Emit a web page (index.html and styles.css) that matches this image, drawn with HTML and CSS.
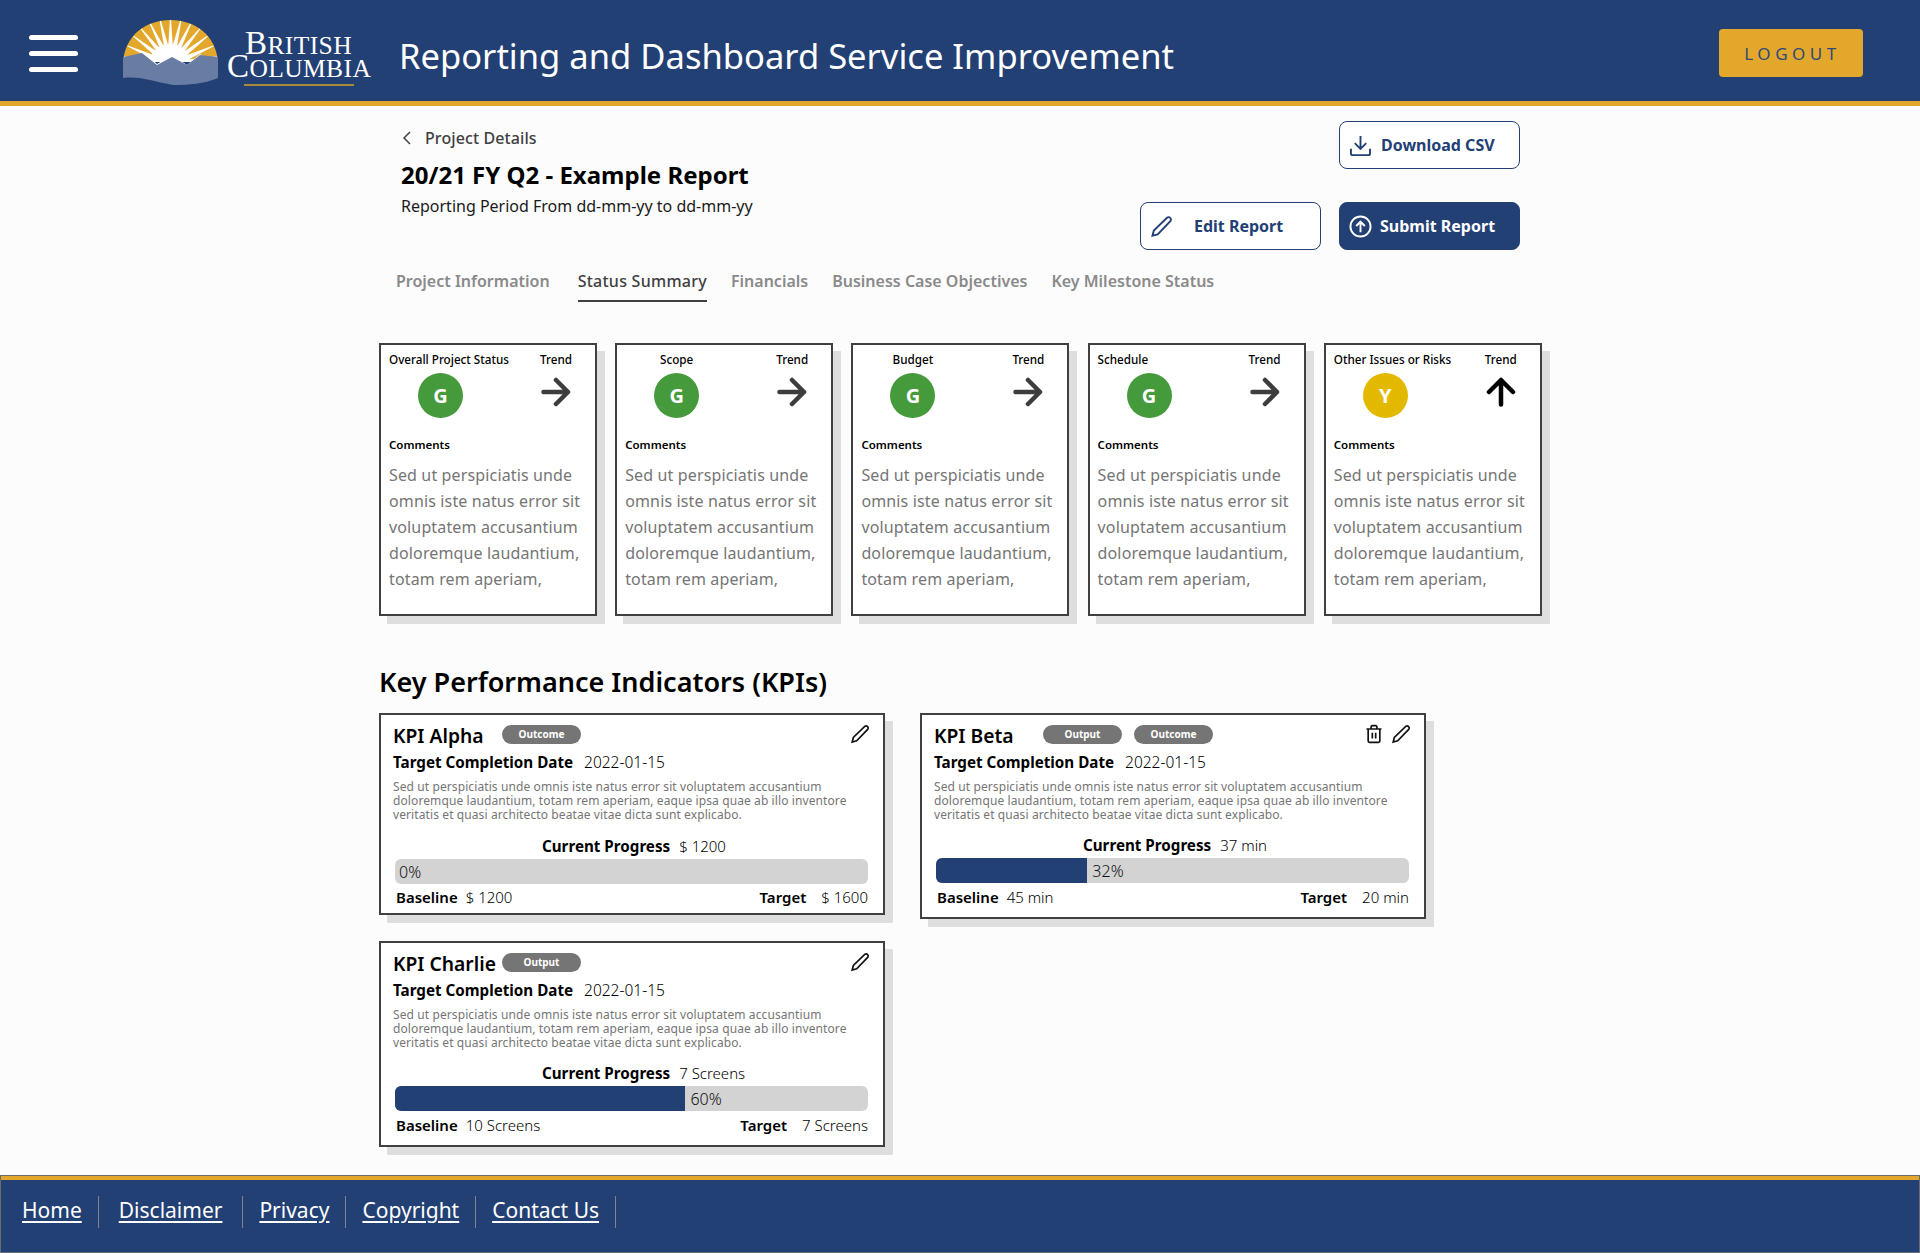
FILE: index.html
```html
<!DOCTYPE html>
<html lang="en">
<head>
<meta charset="utf-8">
<title>Reporting and Dashboard Service Improvement</title>
<link rel="stylesheet" href="styles.css">
</head>
<body>
<svg class="defs" width="0" height="0" aria-hidden="true">
  <defs>
    <symbol id="pencil" viewBox="0 0 24 24"><path d="M18 2.600a2.600 2.600 0 0 1 3.500 3.600L8 20.200 2.600 21.600 4 16.200z"/></symbol>
    <symbol id="arrow-right" viewBox="0 0 30 30"><path d="M2.500 15H27M15 3l12 12-12 12"/></symbol>
    <symbol id="arrow-up" viewBox="0 0 30 30"><path d="M15 27.500V3M3 15L15 3l12 12"/></symbol>
    <symbol id="trash" viewBox="0 0 24 24"><path d="M3 6h18M8.500 6V3.500A1.500 1.500 0 0 1 10 2h4a1.500 1.500 0 0 1 1.500 1.500V6M5 6v14.500A1.500 1.500 0 0 0 6.500 22h11a1.500 1.500 0 0 0 1.500-1.500V6M10 10.500v7M14 10.500v7"/></symbol>
    <polygon id="ray" points="45,30 50,30 48,-2 47,-2"/>
  </defs>
</svg>

<header class="topbar">
  <div class="burger" aria-label="Menu"><span></span><span></span><span></span></div>
  <div class="logo">
    <svg class="logo-mark" viewBox="0 0 95 65" aria-hidden="true">
      <defs><clipPath id="dome"><path d="M0 42C2 16 22 0 47.500 0S93 16 95 42z"/></clipPath></defs>
      <g clip-path="url(#dome)">
        <rect width="95" height="45" fill="#e3a82b"/>
        <g fill="#fff">
          <use href="#ray" transform="rotate(-80 47.500 45)"/>
          <use href="#ray" transform="rotate(-66 47.500 45)"/>
          <use href="#ray" transform="rotate(-52 47.500 45)"/>
          <use href="#ray" transform="rotate(-39 47.500 45)"/>
          <use href="#ray" transform="rotate(-26 47.500 45)"/>
          <use href="#ray" transform="rotate(-13 47.500 45)"/>
          <use href="#ray"/>
          <use href="#ray" transform="rotate(13 47.500 45)"/>
          <use href="#ray" transform="rotate(26 47.500 45)"/>
          <use href="#ray" transform="rotate(39 47.500 45)"/>
          <use href="#ray" transform="rotate(52 47.500 45)"/>
          <use href="#ray" transform="rotate(66 47.500 45)"/>
          <use href="#ray" transform="rotate(80 47.500 45)"/>
        </g>
        <circle cx="47" cy="45" r="21" fill="#fff"/>
      </g>
      <path fill="#fff" d="M12 38l9-6 13 12 15-9 15 10 13-11 8 5v8H12z"/>
      <path fill="#687ca4" d="M0 37l19-4 15 12 15-8 15 8 13-10 18 2v21c-15 6-28 7-45 7-18-3-32-9-50-7z"/>
    </svg>
    <div class="logo-text">
      <div class="logo-line1">B<small>RITISH</small></div>
      <div class="logo-line2">C<small>OLUMBIA</small></div>
      <div class="logo-rule"></div>
    </div>
  </div>
  <h1 class="app-title">Reporting and Dashboard Service Improvement</h1>
  <button class="logout">LOGOUT</button>
</header>

<main class="page">
  <section class="intro">
    <div class="intro-text">
      <a class="back"><svg class="back-chevron" viewBox="0 0 8 14"><path d="M7 1L1 7l6 6"/></svg>Project Details</a>
      <h2 class="report-title">20/21 FY Q2 - Example Report</h2>
      <p class="report-period">Reporting Period From dd-mm-yy to dd-mm-yy</p>
    </div>
    <div class="actions">
      <button class="btn btn-outline btn-download">
        <svg class="btn-icon" viewBox="0 0 24 24"><path d="M12 2v13M6 9.500l6 6 6-6M2 15.500V20a2 2 0 0 0 2 2h16a2 2 0 0 0 2-2v-4.500"/></svg>
        Download CSV
      </button>
      <button class="btn btn-outline btn-edit">
        <svg class="btn-icon"><use href="#pencil"/></svg>
        <span class="btn-edit-label">Edit Report</span>
      </button>
      <button class="btn btn-solid">
        <svg class="btn-icon" viewBox="0 0 24 24"><circle cx="12" cy="12" r="10.500"/><path d="M12 18V7M7.500 11.500L12 7l4.500 4.500"/></svg>
        Submit Report
      </button>
    </div>
  </section>

  <nav class="tabs">
    <a class="tab tab-first">Project Information</a>
    <a class="tab tab-active">Status Summary</a>
    <a class="tab">Financials</a>
    <a class="tab">Business Case Objectives</a>
    <a class="tab">Key Milestone Status</a>
  </nav>

  <section class="status-grid">
    <article class="status-card">
      <div class="status-head">
        <div class="status-col"><div class="status-label label-left">Overall Project Status</div><div class="dot dot-green">G</div></div>
        <div class="trend-col"><div class="status-label">Trend</div><svg class="trend-icon"><use href="#arrow-right"/></svg></div>
      </div>
      <h4 class="comments-label">Comments</h4>
      <p class="comments">Sed ut perspiciatis unde omnis iste natus error sit voluptatem accusantium doloremque laudantium, totam rem aperiam,</p>
    </article>
    <article class="status-card">
      <div class="status-head">
        <div class="status-col"><div class="status-label">Scope</div><div class="dot dot-green">G</div></div>
        <div class="trend-col"><div class="status-label">Trend</div><svg class="trend-icon"><use href="#arrow-right"/></svg></div>
      </div>
      <h4 class="comments-label">Comments</h4>
      <p class="comments">Sed ut perspiciatis unde omnis iste natus error sit voluptatem accusantium doloremque laudantium, totam rem aperiam,</p>
    </article>
    <article class="status-card">
      <div class="status-head">
        <div class="status-col"><div class="status-label">Budget</div><div class="dot dot-green">G</div></div>
        <div class="trend-col"><div class="status-label">Trend</div><svg class="trend-icon"><use href="#arrow-right"/></svg></div>
      </div>
      <h4 class="comments-label">Comments</h4>
      <p class="comments">Sed ut perspiciatis unde omnis iste natus error sit voluptatem accusantium doloremque laudantium, totam rem aperiam,</p>
    </article>
    <article class="status-card">
      <div class="status-head">
        <div class="status-col"><div class="status-label label-left">Schedule</div><div class="dot dot-green">G</div></div>
        <div class="trend-col"><div class="status-label">Trend</div><svg class="trend-icon"><use href="#arrow-right"/></svg></div>
      </div>
      <h4 class="comments-label">Comments</h4>
      <p class="comments">Sed ut perspiciatis unde omnis iste natus error sit voluptatem accusantium doloremque laudantium, totam rem aperiam,</p>
    </article>
    <article class="status-card">
      <div class="status-head">
        <div class="status-col"><div class="status-label label-left">Other Issues or Risks</div><div class="dot dot-yellow">Y</div></div>
        <div class="trend-col"><div class="status-label">Trend</div><svg class="trend-icon trend-up"><use href="#arrow-up"/></svg></div>
      </div>
      <h4 class="comments-label">Comments</h4>
      <p class="comments">Sed ut perspiciatis unde omnis iste natus error sit voluptatem accusantium doloremque laudantium, totam rem aperiam,</p>
    </article>
  </section>

  <h2 class="kpi-heading">Key Performance Indicators (KPIs)</h2>

  <section class="kpi-grid">
    <article class="kpi-card">
      <div class="kpi-head">
        <h3 class="kpi-name">KPI Alpha</h3>
        <span class="badge">Outcome</span>
        <div class="kpi-tools"><svg class="tool"><use href="#pencil"/></svg></div>
      </div>
      <div class="kpi-date"><b>Target Completion Date</b><span>2022-01-15</span></div>
      <p class="kpi-desc">Sed ut perspiciatis unde omnis iste natus error sit voluptatem accusantium doloremque laudantium, totam rem aperiam, eaque ipsa quae ab illo inventore veritatis et quasi architecto beatae vitae dicta sunt explicabo.</p>
      <div class="kpi-current"><b>Current Progress</b><span>$ 1200</span></div>
      <div class="bar"><span class="bar-label">0%</span></div>
      <div class="kpi-foot"><div><b>Baseline</b><span>$ 1200</span></div><div><b class="target-label">Target</b><span>$ 1600</span></div></div>
    </article>
    <article class="kpi-card kpi-tall">
      <div class="kpi-head">
        <h3 class="kpi-name">KPI Beta</h3>
        <span class="badge">Output</span>
        <span class="badge">Outcome</span>
        <div class="kpi-tools"><svg class="tool"><use href="#trash"/></svg><svg class="tool"><use href="#pencil"/></svg></div>
      </div>
      <div class="kpi-date"><b>Target Completion Date</b><span>2022-01-15</span></div>
      <p class="kpi-desc">Sed ut perspiciatis unde omnis iste natus error sit voluptatem accusantium doloremque laudantium, totam rem aperiam, eaque ipsa quae ab illo inventore veritatis et quasi architecto beatae vitae dicta sunt explicabo.</p>
      <div class="kpi-current"><b>Current Progress</b><span>37 min</span></div>
      <div class="bar"><div class="bar-fill" style="width:32%"></div><span class="bar-label">32%</span></div>
      <div class="kpi-foot"><div><b>Baseline</b><span>45 min</span></div><div><b class="target-label">Target</b><span>20 min</span></div></div>
    </article>
    <article class="kpi-card kpi-tall">
      <div class="kpi-head">
        <h3 class="kpi-name">KPI Charlie</h3>
        <span class="badge">Output</span>
        <div class="kpi-tools"><svg class="tool"><use href="#pencil"/></svg></div>
      </div>
      <div class="kpi-date"><b>Target Completion Date</b><span>2022-01-15</span></div>
      <p class="kpi-desc">Sed ut perspiciatis unde omnis iste natus error sit voluptatem accusantium doloremque laudantium, totam rem aperiam, eaque ipsa quae ab illo inventore veritatis et quasi architecto beatae vitae dicta sunt explicabo.</p>
      <div class="kpi-current"><b>Current Progress</b><span>7 Screens</span></div>
      <div class="bar"><div class="bar-fill" style="width:61.400%"></div><span class="bar-label">60%</span></div>
      <div class="kpi-foot"><div><b>Baseline</b><span>10 Screens</span></div><div><b class="target-label">Target</b><span>7 Screens</span></div></div>
    </article>
  </section>
</main>

<footer class="footer">
  <ul class="footer-links">
    <li class="fl-home"><a>Home</a></li>
    <li class="fl-disclaimer"><a>Disclaimer</a></li>
    <li><a>Privacy</a></li>
    <li><a>Copyright</a></li>
    <li><a>Contact Us</a></li>
  </ul>
</footer>
</body>
</html>
```

FILE: styles.css
```css
* { box-sizing: border-box; }
html, body { margin: 0; padding: 0; }
body {
  background: #fcfcfc;
  font-family: "Noto Sans", sans-serif;
  color: #000;
  width: 1920px;
  height: 1253px;
  overflow: hidden;
}
h1, h2, h3, h4, p, ul { margin: 0; padding: 0; }
.defs { position: absolute; }

/* header */
.topbar {
  height: 106px;
  background: #234075;
  border-bottom: 5px solid #e3a82b;
  display: flex;
  align-items: center;
  padding: 5px 57px 0 29px;
}
.burger { width: 49px; display: flex; flex-direction: column; gap: 11px; }
.burger span { display: block; height: 5px; background: #fff; border-radius: 3px; }
.logo { display: flex; margin-left: 45px; align-items: flex-start; align-self: flex-start; padding-top: 15px; }
.logo-mark { width: 95px; height: 65px; display: block; }
.logo-text {
  width: 143px;
  margin-left: 9px;
  font-family: "Liberation Serif", serif;
  color: #fff;
  text-align: center;
  line-height: 24px;
  padding-top: 11px;
  font-size: 33px;
}
.logo-text small { font-size: 25.500px; }
.logo-line1 { height: 23px; letter-spacing: 0.4px; }
.logo-line2 { height: 24px; white-space: nowrap; letter-spacing: 0.4px; }
.logo-rule { width: 110px; height: 2px; margin: 6px auto 0; background: #a88a3c; }
.app-title {
  margin: 5px 0 0 29px;
  font-size: 34.550px;
  line-height: 48px;
  font-weight: 400;
  color: #fff;
  flex: 1;
}
.logout {
  width: 144px;
  height: 48px;
  background: #e3a82b;
  color: #2f4a78;
  border: 0;
  border-radius: 4px;
  font-family: inherit;
  font-size: 17px;
  letter-spacing: 4.500px;
  padding-left: 9px;
}

/* intro */
.page { padding: 0 0 0 379px; height: 1069px; }
.intro {
  width: 1141px;
  display: flex;
  justify-content: space-between;
  padding: 15px 0 0 22px;
}
.intro-text { padding-top: 5px; }
.back { display: flex; align-items: center; font-size: 16px; line-height: 24px; font-weight: 500; color: #404040; letter-spacing: 0.1px; }
.back-chevron { width: 8px; height: 14px; margin: 0 14px 0 2px; fill: none; stroke: #404040; stroke-width: 1.5; }
.report-title { font-size: 24px; line-height: 34px; font-weight: 700; margin-top: 8px; }
.report-period { font-size: 16px; line-height: 24px; margin-top: 2px; color: #1a1a1a; }
.actions {
  display: grid;
  grid-template-columns: 181px 181px;
  column-gap: 18px;
  row-gap: 33px;
}
.btn {
  height: 48px;
  border-radius: 8px;
  display: flex;
  align-items: center;
  font-family: inherit;
  font-size: 16px;
  font-weight: 700;
  padding: 0 0 0 9px;
  white-space: nowrap;
}
.btn-icon { width: 23px; height: 23px; margin-right: 9px; fill: none; stroke: currentColor; stroke-width: 2; flex: none; }
.btn-outline { background: #fff; color: #234075; border: 1px solid #234075; }
.btn-solid { background: #234075; color: #fff; border: 1px solid #234075; }
.btn-solid .btn-icon { margin-right: 8px; }
.btn-download { grid-column: 2; }
.btn-edit-label { margin-left: 12px; }

/* tabs */
.tabs { display: flex; gap: 24px; margin: 19px 0 0 17px; height: 53px; }
.tab { font-size: 16px; line-height: 24px; font-weight: 600; color: #8a8a8a; height: 33px; white-space: nowrap; }
.tab-first { margin-right: 4px; }
.tab-active { color: #404040; font-weight: 500; letter-spacing: 0.26px; border-bottom: 2px solid #404040; }

/* status cards */
.status-grid { display: flex; gap: 18.200px; margin-top: 21px; }
.status-card {
  width: 218px;
  height: 273px;
  flex: none;
  background: #fff;
  border: 2px solid #404040;
  box-shadow: 8px 8px 0 #dedede;
  padding: 6px 8px 0;
}
.status-head { display: flex; height: 74px; }
.status-col { width: 103px; flex: none; display: flex; flex-direction: column; align-items: center; }
.status-col .status-label { width: 103px; text-align: center; }
.status-col .label-left { text-align: left; }
.trend-col { width: 50px; margin-left: 39px; flex: none; display: flex; flex-direction: column; align-items: center; }
.status-label { font-size: 11.700px; line-height: 16px; font-weight: 500; white-space: nowrap; }
.dot {
  width: 45px;
  height: 45px;
  border-radius: 50%;
  margin-top: 6px;
  color: #fff;
  font-size: 20px;
  font-weight: 700;
  display: flex;
  align-items: center;
  justify-content: center;
}
.dot-green { background: #459a3b; }
.dot-yellow { background: #e3b900; }
.trend-icon { width: 30px; height: 30px; margin-top: 10px; fill: none; stroke: #3d3d3d; stroke-width: 4.500; stroke-linecap: round; stroke-linejoin: round; }
.trend-up { stroke: #000; }
.comments-label { font-size: 11.500px; line-height: 16px; font-weight: 600; margin-top: 12px; }
.comments { font-size: 16px; line-height: 26px; color: #757575; margin-top: 9px; width: 200px; letter-spacing: 0.14px; }

/* KPI */
.kpi-heading { font-size: 27px; line-height: 36px; font-weight: 600; margin-top: 48px; }
.kpi-grid { display: grid; grid-template-columns: 506px 506px; column-gap: 35px; row-gap: 22px; align-items: start; margin-top: 13px; }
.kpi-card {
  background: #fff;
  border: 2px solid #404040;
  box-shadow: 8px 8px 0 #dedede;
  padding: 6px 15px 5px 12px;
  height: 202px;
}
.kpi-tall { height: 206px; }
.kpi-head { display: flex; align-items: flex-start; height: 30px; }
.kpi-name { width: 109px; font-size: 19.300px; line-height: 29px; font-weight: 600; white-space: nowrap; }
.badge {
  width: 79px;
  height: 19px;
  margin: 4px 12px 0 0;
  border-radius: 10px;
  background: #757575;
  color: #fff;
  font-size: 10px;
  font-weight: 700;
  line-height: 19px;
  text-align: center;
}
.kpi-tools { margin-left: auto; display: flex; gap: 7px; padding-top: 3px; margin-right: -2px; }
.tool { width: 20px; height: 20px; fill: none; stroke: #111; stroke-width: 2; }
.kpi-date { font-size: 15.500px; line-height: 22px; display: flex; gap: 11px; }
.kpi-date b { font-weight: 700; font-size: 15.200px; }
.kpi-current b, .kpi-foot b { font-weight: 600; }
.kpi-date span, .kpi-current span, .kpi-foot span { font-weight: 300; }
.kpi-desc { font-size: 12px; line-height: 14px; color: #757575; margin-top: 7px; width: 470px; letter-spacing: 0.1px; }
.kpi-current { font-size: 15px; line-height: 22px; display: flex; gap: 9px; align-items: baseline; margin-top: 13px; padding-left: 149px; }
.kpi-current b { font-size: 15.200px; font-weight: 700; }
.kpi-tall .kpi-current { margin-top: 12px; }
.bar { height: 25px; background: #d3d3d3; border-radius: 6px; margin: 2px 0 0 2px; display: flex; align-items: center; overflow: hidden; }
.bar-fill { height: 100%; background: #234075; }
.bar-label { font-size: 16px; line-height: 25px; font-weight: 300; color: #111; padding: 1px 0 0 4px; }
.bar-fill + .bar-label { padding-left: 5px; }
.kpi-foot { display: flex; justify-content: space-between; font-size: 15px; line-height: 22px; padding: 2px 0 0 3px; }
.kpi-tall .kpi-foot { padding-top: 3px; }
.kpi-foot div { display: flex; gap: 8px; }
.kpi-foot .target-label { margin-right: 7px; }

/* footer */
.footer {
  height: 78px;
  background: #234075;
  border-top: 5px solid #e3a82b;
  outline: 1px solid #6b6b6b;
  outline-offset: -1px;
  padding: 16px 0 0 22px;
}
.footer-links { list-style: none; display: flex; }
.footer-links li { height: 32px; padding: 0 16px; border-right: 1px solid #7d8597; font-size: 21px; line-height: 28px; color: #fff; }
.footer-links a { text-decoration: underline; text-underline-offset: 3px; }
.footer-links .fl-home { padding: 0 16px 0 0; }
.footer-links .fl-disclaimer { padding: 0 20px 0 20px; }
```
